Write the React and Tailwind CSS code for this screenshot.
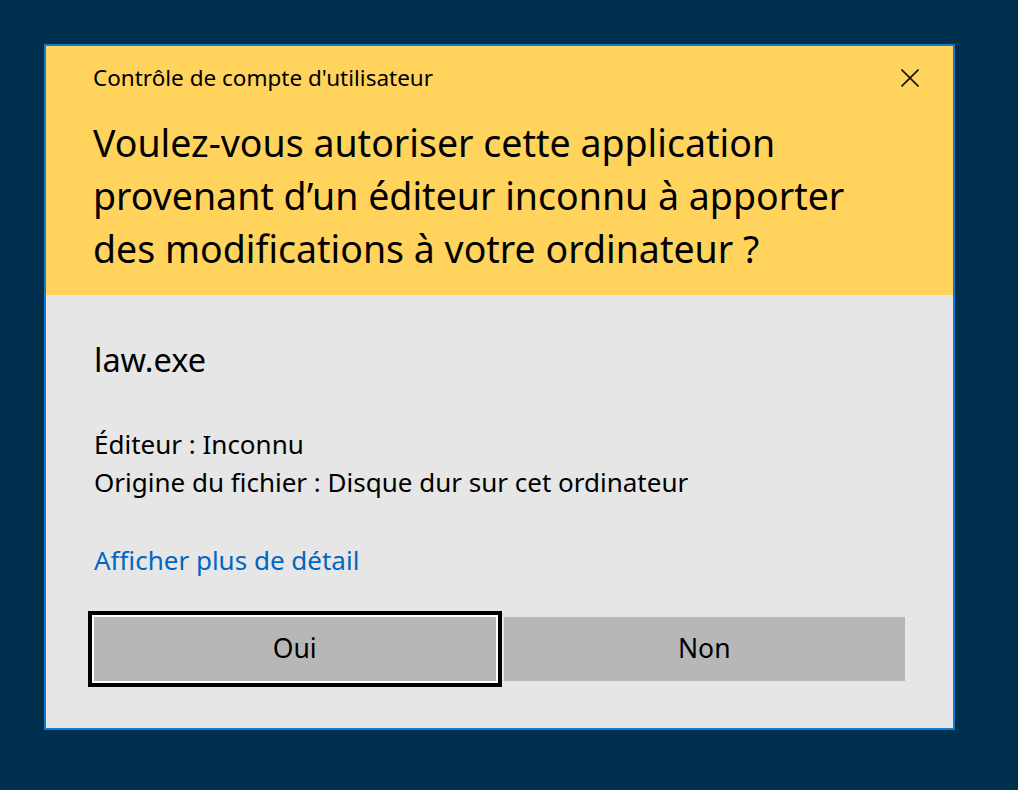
import React from "react";

// Windows UAC prompt (French)
const CloseIcon = () => (
  <svg width="18" height="18" viewBox="0 0 18 18" fill="none">
    <path d="M0.5 0.5 L17.5 17.5 M17.5 0.5 L0.5 17.5" stroke="#111" strokeWidth="1.6" />
  </svg>
);

const App = () => {
  return (
    <div
      className="min-h-[790px] w-full bg-[#00304e] pl-[44px] pt-[44px]"
      style={{ fontFamily: '"Noto Sans", "Open Sans", sans-serif' }}
    >
      <div className="flex h-[686px] w-[911px] flex-col border-2 border-[#1479d0]">
        {/* yellow header */}
        <div className="bg-[#ffd35c] pb-[20px] pl-[47px] pr-[34px] pt-[22px] text-black">
          <div className="flex items-center justify-between">
            <span className="text-[22.5px] leading-[20px]">Contrôle de compte d'utilisateur</span>
            <CloseIcon />
          </div>
          <h1 className="mt-[28px] text-[37.5px] leading-[53px] font-normal">
            Voulez-vous autoriser cette application
            <br />
            provenant d’un éditeur inconnu à apporter
            <br />
            des modifications à votre ordinateur ?
          </h1>
        </div>

        {/* gray body */}
        <div className="flex flex-1 flex-col bg-[#e6e6e6] px-[48px] pt-[47px] text-black">
          <div className="text-[32.5px] leading-[36px]">law.exe</div>
          <div className="mt-[47px] text-[26px] leading-[38px]">
            <div>Éditeur : Inconnu</div>
            <div>Origine du fichier : Disque dur sur cet ordinateur</div>
          </div>
          <div className="mt-[40px] text-[26px] leading-[38px] text-[#0067c0]">
            Afficher plus de détail
          </div>
          <div className="mt-[38px] grid grid-cols-2 gap-[8px]">
            <button className="h-[64px] bg-[#b7b7b7] text-[26.5px] text-black outline-4 outline-offset-2 outline-black ring-2 ring-white">
              Oui
            </button>
            <button className="h-[64px] bg-[#b7b7b7] text-[26.5px] text-black">Non</button>
          </div>
        </div>
      </div>
    </div>
  );
};

export default App;
